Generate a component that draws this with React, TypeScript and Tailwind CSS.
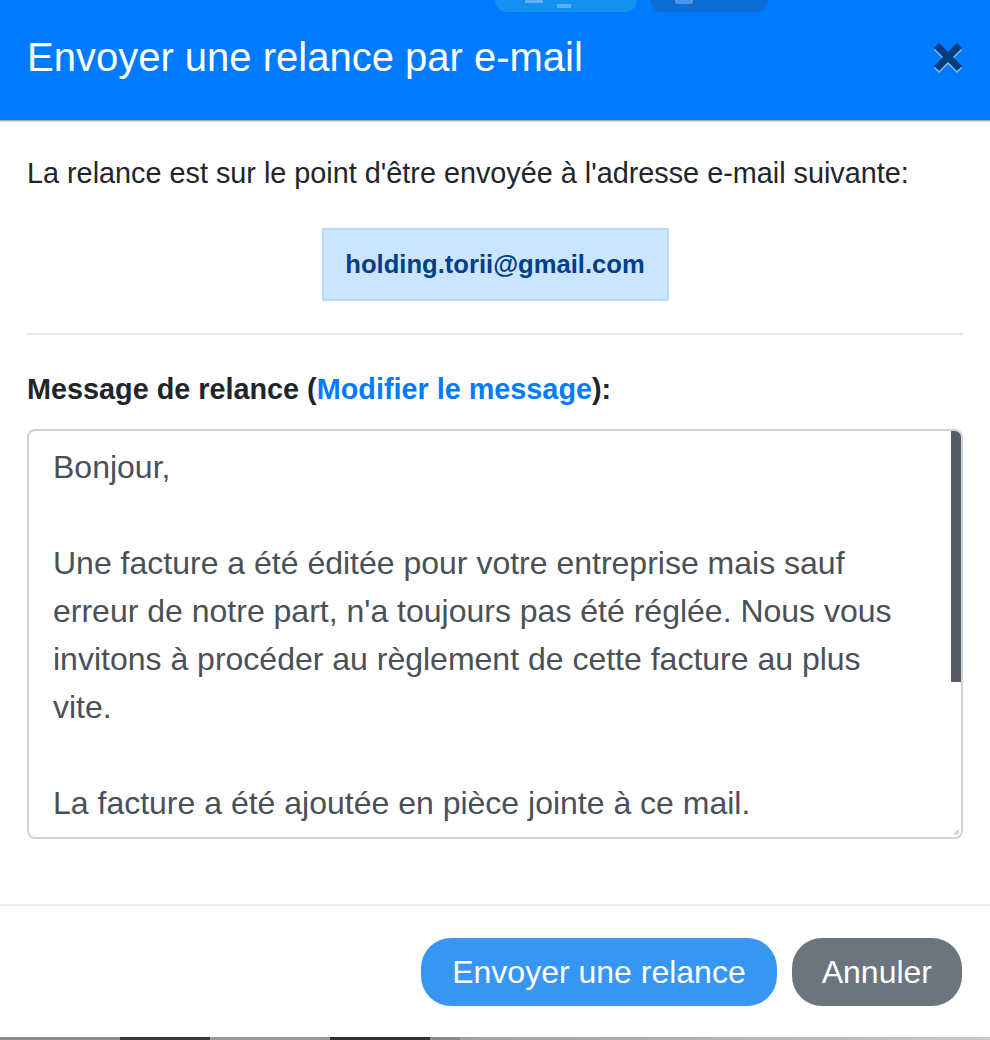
import React from "react";

const lines: string[] = [
  "Bonjour,",
  "",
  "Une facture a été éditée pour votre entreprise mais sauf",
  "erreur de notre part, n'a toujours pas été réglée. Nous vous",
  "invitons à procéder au règlement de cette facture au plus",
  "vite.",
  "",
  "La facture a été ajoutée en pièce jointe à ce mail.",
];

function CloseIcon() {
  return (
    <svg width="28" height="30" viewBox="0 0 28 30" className="block">
      <g stroke="#80bdff" strokeWidth="7" strokeLinecap="butt">
        <line x1="2.5" y1="4.5" x2="25.5" y2="27.5" />
        <line x1="25.5" y1="4.5" x2="2.5" y2="27.5" />
      </g>
      <g stroke="#073c78" strokeWidth="7" strokeLinecap="butt">
        <line x1="2.5" y1="2.5" x2="25.5" y2="25.5" />
        <line x1="25.5" y1="2.5" x2="2.5" y2="25.5" />
      </g>
    </svg>
  );
}

export default function App() {
  return (
    <div className="w-[990px] h-[1040px] overflow-hidden bg-white flex flex-col font-['Liberation_Sans',Arial,sans-serif]">
      {/* Header */}
      <div className="relative h-[120px] shrink-0 bg-[#007bff] flex items-start justify-between pl-[27px] pr-[28px] pt-[33px]">
        <div className="absolute top-0 left-[495px] w-[142px] h-[12px] rounded-b-[12px] bg-[#1591f1] flex items-start gap-[14px] pl-[30px]">
          <div className="w-[18px] h-[3px] bg-[#5fb0f5]" />
          <div className="w-[14px] h-[4px] mt-[4px] bg-[#5fb0f5]" />
        </div>
        <div className="absolute top-0 left-[650px] w-[118px] h-[12px] rounded-b-[12px] bg-[#0c6cd8] pl-[25px]">
          <div className="w-[18px] h-[4px] rounded-b-[3px] bg-[#4f94e4]" />
        </div>
        <h1 className="text-[40px] leading-[48px] text-white font-normal">Envoyer une relance par e-mail</h1>
        <div className="mt-[10px]">
          <CloseIcon />
        </div>
      </div>
      <div className="h-px shrink-0 bg-[#a3aab1]" />
      <div className="h-px shrink-0 bg-[#e0e3e6]" />

      {/* Body */}
      <div className="px-[27px] shrink-0 flex flex-col">
        <p className="mt-[30px] text-[28.8px] leading-[43px] text-[#212529] whitespace-nowrap">
          La relance est sur le point d'être envoyée à l'adresse e-mail suivante:
        </p>
        <div className="mt-[33px] mx-auto w-[347px] h-[73px] border-2 border-[#b8daff] bg-[#cce5ff] text-[#004085] font-bold text-[25.6px] flex items-center justify-center">
          holding.torii@gmail.com
        </div>
        <div className="mt-[32px] h-[2px] bg-[#e6e6e6]" />
        <p className="mt-[33px] text-[28.8px] leading-[43px] font-bold text-[#212529] whitespace-nowrap">
          Message de relance (<span className="text-[#007bff]">Modifier le message</span>):
        </p>
        <div className="relative mt-[18px] h-[410px] border-2 border-[#ced4da] rounded-[8px] overflow-hidden bg-white px-[24px] py-[12px] text-[32px] leading-[48px] text-[#495057]">
          {lines.map((l, i) =>
            l === "" ? (
              <div key={i} className="h-[48px]" />
            ) : (
              <div key={i} className="whitespace-nowrap">
                {l}
              </div>
            )
          )}
          <div className="absolute top-0 right-0 w-[10px] h-[251px] bg-[#575b64]" />
          <svg className="absolute right-[2px] bottom-[2px]" width="6" height="6" viewBox="0 0 6 6">
            <line x1="1" y1="5.5" x2="5.5" y2="1" stroke="#8a8f96" strokeWidth="1" />
            <line x1="3.5" y1="5.5" x2="5.5" y2="3.5" stroke="#8a8f96" strokeWidth="1" />
          </svg>
        </div>
      </div>

      {/* Footer */}
      <div className="mt-[65px] h-[2px] shrink-0 bg-[#e9ecef]" />
      <div className="flex-1 flex justify-end items-start gap-[15px] pt-[32px] pr-[28px]">
        <button className="h-[68px] px-[31px] rounded-[30px] bg-[#3896f3] text-white text-[32px] leading-none">
          Envoyer une relance
        </button>
        <button className="h-[68px] px-[30px] rounded-[30px] bg-[#6c757d] text-white text-[32px] leading-none">
          Annuler
        </button>
      </div>
      <div className="h-[3px] shrink-0 flex">
        <div className="w-[120px] bg-[#8d8d8d]" />
        <div className="w-[90px] bg-[#3a3a3a]" />
        <div className="w-[120px] bg-[#999999]" />
        <div className="w-[100px] bg-[#333333]" />
        <div className="w-[30px] bg-[#8a8a8a]" />
        <div className="flex-1 bg-gradient-to-r from-[#a0a0a0] to-[#c8c8c8]" />
      </div>
    </div>
  );
}
